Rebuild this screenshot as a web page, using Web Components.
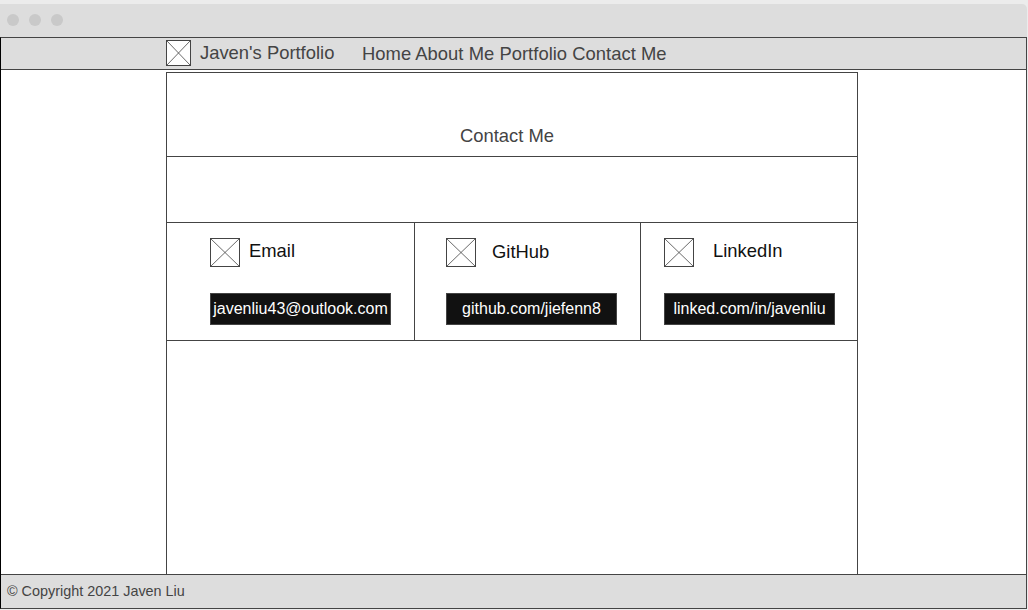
<!DOCTYPE html>
<html lang="en">
<head>
<meta charset="utf-8">
<title>Javen's Portfolio</title>
<style>
html, body { margin: 0; height: 100%; overflow: hidden; }
body { background: #ececec; font: 18.4px/20px "Liberation Sans", Arial, sans-serif; color: #444; }
</style>
</head>
<body>
<browser-frame>
  <site-nav slot="nav" brand="Javen's Portfolio">Home About Me Portfolio Contact Me</site-nav>
  <contact-page heading="Contact Me">
    <contact-card name="Email" style="--gap:9px;--button:181px">javenliu43@outlook.com</contact-card>
    <contact-card name="GitHub" style="--inset:31px;--gap:16px;--drop:1px">github.com/jiefenn8</contact-card>
    <contact-card name="LinkedIn" style="--inset:23px;--gap:19px">linked.com/in/javenliu</contact-card>
  </contact-page>
  <site-footer slot="footer">© Copyright 2021 Javen Liu</site-footer>
</browser-frame>
<script>
function define(name, markup) {
  customElements.define(name, class extends HTMLElement {
    constructor() {
      super();
      const t = document.createElement('template');
      t.innerHTML = '<style>*{box-sizing:border-box}</style>' + markup;
      this.attachShadow({ mode: 'open' }).append(t.content.cloneNode(true));
    }
    connectedCallback() {
      this.shadowRoot.querySelectorAll('[data-text]').forEach(e => {
        e.textContent = this.getAttribute(e.dataset.text);
      });
    }
  });
}

define('image-placeholder', `
<style>
:host { display: block; flex: none; box-sizing: border-box; width: 30px; height: 29px; border: 1px solid #444; background: #fff; }
svg { display: block; width: 100%; height: 100%; }
</style>
<svg viewBox="0 0 100 100" preserveAspectRatio="none"><path d="M0 0 100 100M100 0 0 100" stroke="#444" stroke-width=".8" vector-effect="non-scaling-stroke"/></svg>`);

define('browser-frame', `
<style>
:host { display: grid; grid-template-rows: 33px 1fr; box-sizing: border-box; height: 100vh; padding: 4px 1px 1px 0; }
header { display: flex; gap: 10px; padding: 10px 7px; background: #ddd; border-radius: 0 5px 0 0; }
i { width: 12px; height: 12px; border-radius: 50%; background: #c9c9c9; }
.view { display: grid; grid-template-rows: 32px 1fr 34px; min-height: 0; background: #fff; border: 1px solid #444; border-left-color: #000; }
main { display: flex; min-height: 0; }
</style>
<header><i></i><i></i><i></i></header>
<div class="view"><slot name="nav"></slot><main><slot></slot></main><slot name="footer"></slot></div>`);

define('site-nav', `
<style>
:host { display: flex; align-items: flex-start; box-sizing: border-box; padding: 2px 0 0 165px; background: #ddd; border-bottom: 1px solid #444; white-space: nowrap; }
image-placeholder { width: 25px; height: 26px; }
.brand { margin: 3px 0 0 9px; width: 162px; }
nav { margin-top: 4px; letter-spacing: .03px; }
</style>
<image-placeholder></image-placeholder><div class="brand" data-text="brand"></div><nav><slot></slot></nav>`);

define('contact-page', `
<style>
:host { display: grid; grid-template-rows: 84px 66px 118px 1fr; box-sizing: border-box; width: 692px; margin: 2px 0 0 165px; border: 1px solid #444; border-bottom: 0; }
h1 { font: inherit; margin: 0; padding: 53px 0 0 293px; border-bottom: 1px solid #444; }
.band { border-bottom: 1px solid #444; }
.cards { display: grid; grid-template-columns: 248px 226px 1fr; border-bottom: 1px solid #444; }
</style>
<h1 data-text="heading"></h1><div class="band"></div><div class="cards"><slot></slot></div>`);

define('contact-card', `
<style>
:host { display: block; box-sizing: border-box; padding: 15px 0 0 var(--inset, 43px); border-right: 1px solid #444; }
:host(:last-of-type) { border-right: 0; }
.title { display: flex; color: #111; }
.title span { margin: calc(3px + var(--drop, 0px)) 0 0 var(--gap); }
.button { display: flex; align-items: center; justify-content: center; width: var(--button, 171px); height: 32px; margin-top: 26px; background: #111; border: 1px solid #444; color: #fff; font-size: 16px; line-height: 18px; white-space: nowrap; }
</style>
<div class="title"><image-placeholder></image-placeholder><span data-text="name"></span></div>
<div class="button"><slot></slot></div>`);

define('site-footer', `
<style>
:host { display: block; box-sizing: border-box; padding: 8px 0 0 6px; background: #ddd; border-top: 1px solid #444; font-size: 14.4px; line-height: 16px; }
</style>
<slot></slot>`);
</script>
</body>
</html>
